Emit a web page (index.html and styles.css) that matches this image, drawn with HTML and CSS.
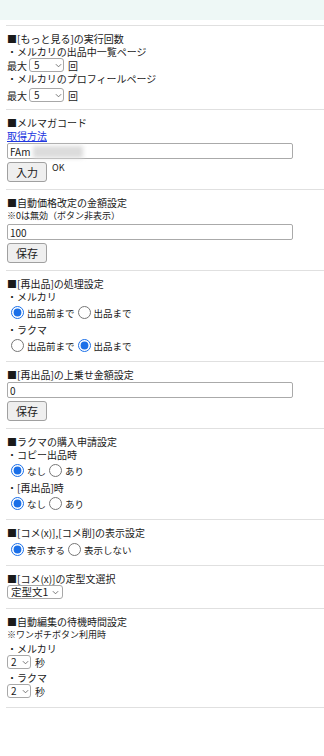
FILE: index.html
```html
<!DOCTYPE html>
<html lang="ja">
<head>
  <meta charset="UTF-8">
  <meta name="viewport" content="width=device-width, initial-scale=1.0">
  <title>設定</title>
  <link rel="stylesheet" href="styles.css">
</head>
<body>
<div class="topbar"></div>
<div class="settings">
  <div class="section">
    <div>■[もっと見る]の実行回数</div>
    <div>・メルカリの出品中一覧ページ</div>
    <div class="row">最大<span class="select-wrap"><select class="count"><option>5</option></select><svg viewBox="0 0 8 5"><path d="M1 1l3 3 3-3"/></svg></span>回</div>
    <div>・メルカリのプロフィールページ</div>
    <div class="row second">最大<span class="select-wrap"><select class="count"><option>5</option></select><svg viewBox="0 0 8 5"><path d="M1 1l3 3 3-3"/></svg></span>回</div>
  </div>

  <div class="section">
    <div>■メルマガコード</div>
    <div><a href="#">取得方法</a></div>
    <div class="field">
      <input type="text" class="text-input" value="FAm">
      <span class="masked"></span>
    </div>
    <div class="btn-row"><button>入力</button><span class="ok">OK</span></div>
  </div>

  <div class="section">
    <div>■自動価格改定の金額設定</div>
    <div class="note">※0は無効（ボタン非表示）</div>
    <input type="text" class="text-input" value="100">
    <div class="btn-row"><button>保存</button></div>
  </div>

  <div class="section">
    <div>■[再出品]の処理設定</div>
    <div>・メルカリ</div>
    <div class="radios">
      <label><input type="radio" name="mer" checked>出品前まで</label>
      <label><input type="radio" name="mer">出品まで</label>
    </div>
    <div>・ラクマ</div>
    <div class="radios">
      <label><input type="radio" name="rak">出品前まで</label>
      <label><input type="radio" name="rak" checked>出品まで</label>
    </div>
  </div>

  <div class="section">
    <div>■[再出品]の上乗せ金額設定</div>
    <input type="text" class="text-input" value="0">
    <div class="btn-row"><button>保存</button></div>
  </div>

  <div class="section">
    <div>■ラクマの購入申請設定</div>
    <div>・コピー出品時</div>
    <div class="radios">
      <label><input type="radio" name="copy" checked>なし</label>
      <label><input type="radio" name="copy">あり</label>
    </div>
    <div>・[再出品]時</div>
    <div class="radios">
      <label><input type="radio" name="relist" checked>なし</label>
      <label><input type="radio" name="relist">あり</label>
    </div>
  </div>

  <div class="section">
    <div>■[コメ(x)],[コメ削]の表示設定</div>
    <div class="radios single">
      <label><input type="radio" name="show" checked>表示する</label>
      <label><input type="radio" name="show">表示しない</label>
    </div>
  </div>

  <div class="section tall">
    <div>■[コメ(x)]の定型文選択</div>
    <div class="row"><span class="select-wrap"><select class="template"><option>定型文1</option></select><svg viewBox="0 0 8 5"><path d="M1 1l3 3 3-3"/></svg></span></div>
  </div>

  <div class="section tall">
    <div>■自動編集の待機時間設定</div>
    <div class="note">※ワンポチボタン利用時</div>
    <div class="sub">・メルカリ</div>
    <div class="row"><span class="select-wrap"><select class="wait"><option>2</option></select><svg viewBox="0 0 8 5"><path d="M1 1l3 3 3-3"/></svg></span>秒</div>
    <div class="sub next">・ラクマ</div>
    <div class="row"><span class="select-wrap"><select class="wait"><option>2</option></select><svg viewBox="0 0 8 5"><path d="M1 1l3 3 3-3"/></svg></span>秒</div>
  </div>
  <div class="section end"></div>
</div>
</body>
</html>
```

FILE: styles.css
```css
body { margin: 0; background: #fff; color: #1a1a1a; font-family: "Noto Sans CJK JP", "Liberation Sans", sans-serif; font-size: 10px; line-height: 13px; }
.topbar { height: 20px; background: #eef8f6; }
.settings { margin-left: 6px; padding-top: 5px; }
.section { border-top: 1px solid #e0e0e0; padding: 6px 0 7px 1px; }
.section.tall { padding-bottom: 9px; }
.section.end { padding: 0; }
a { color: #2036e0; text-decoration: underline; }
.note { font-size: 9px; }

.row { display: flex; align-items: center; gap: 2px; height: 14px; }
.row.second { margin-top: 3px; }
.select-wrap { position: relative; display: inline-block; height: 14px; }
.select-wrap svg { position: absolute; right: 4px; top: 5px; width: 7px; height: 5px; fill: none; stroke: #666; stroke-width: 1; pointer-events: none; }
select { appearance: none; -webkit-appearance: none; box-sizing: border-box; display: block; height: 14px; margin: 0; padding: 0 0 0 4px; font-family: inherit; font-size: 10px; line-height: 12px; color: #1a1a1a; background: #fff; border: 1px solid #a8a8a8; border-radius: 3px; }
.count { width: 35px; margin-right: 2px; }
.wait { width: 24px; padding-left: 3px; margin-right: 2px; }
.template { width: 56px; font-size: 10.5px; padding-left: 3px; }

.field { position: relative; }
.text-input { box-sizing: border-box; display: block; width: 286px; height: 16px; margin: 1px 0 0; padding: 0 2px; font-family: inherit; font-size: 10px; color: #1a1a1a; border: 1px solid #aaa; border-radius: 2px; }
.note + .text-input { margin-top: 2px; }
.masked { position: absolute; left: 26px; top: 3px; width: 50px; height: 12px; background: #dcdcdc; filter: blur(2px); }

.btn-row { display: flex; align-items: flex-start; gap: 5px; margin-top: 3px; }
button { box-sizing: border-box; height: 20px; padding: 0 8px; font-family: inherit; font-size: 11px; color: #1a1a1a; background: #efefef; border: 1px solid #a0a0a0; border-radius: 3px; }
.ok { font-size: 9px; line-height: 11px; }

.radios { display: flex; align-items: center; gap: 3px; height: 17px; margin: 1px 0 2px; font-size: 9.5px; }
.radios:last-child { margin-bottom: 0; }
.radios.single { margin-top: 2px; }
.radios label { display: flex; align-items: center; gap: 2px; padding-top: 2px; }
.radios input { width: 13px; height: 13px; margin: -2px 1px 0 4px; accent-color: #1a6fe8; }
.radios label + label input { margin-left: 0; }

.sub { margin-top: 1px; }
.sub.next { margin-top: 2px; }
```
